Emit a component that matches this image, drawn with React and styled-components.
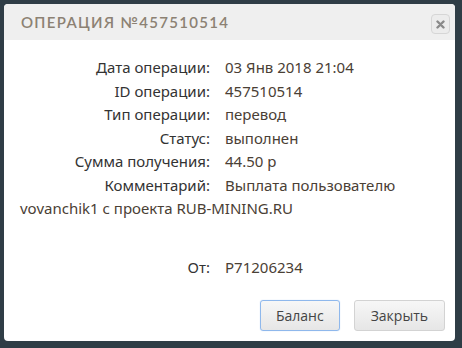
import React from "react";
import styled, { createGlobalStyle } from "styled-components";

const Global = createGlobalStyle`
  html, body { margin: 0; padding: 0; background: #2f3d46; }
  body { width: 462px; height: 348px; overflow: hidden; }
`;

const Page = styled.div`
  padding: 4px 7px 0 4px;
`;

const Dialog = styled.div`
  width: 451px;
  height: 337px;
  background: #fff;
  border-radius: 4px;
  overflow: hidden;
  display: flex;
  flex-direction: column;
`;

const Header = styled.div`
  height: 36px;
  background: #efefef;
  display: flex;
  align-items: center;
  justify-content: space-between;
  padding: 0 5px 0 17px;
`;

const Title = styled.div`
  font-family: "Lato", "Noto Sans", sans-serif;
  font-weight: 600;
  font-size: 15px;
  letter-spacing: 1.3px;
  color: #8c8173;
  text-transform: uppercase;
`;

const CloseBtn = styled.button`
  width: 19px;
  height: 20px;
  padding: 0;
  border: 1px solid #d6d6d6;
  border-radius: 4px;
  background: #ececec;
  display: flex;
  align-items: center;
  justify-content: center;
  margin-top: 4px;
`;

const Body = styled.div`
  flex: 1;
  padding: 16px 16px 0 16px;
  font-family: "Noto Sans", sans-serif;
  font-size: 15px;
  line-height: 23.5px;
  color: #333;
`;

const Row = styled.div`
  margin-top: ${(p) => p.$gap || 0}px;
`;

const Label = styled.span`
  display: inline-block;
  width: 190px;
  text-align: right;
  padding-right: 15px;
  color: #333;
`;

const Value = styled.span`
  color: #4a4035;
`;

const Footer = styled.div`
  display: flex;
  justify-content: flex-end;
  gap: 14px;
  padding: 0 10px 10px 0;
`;

const Button = styled.button`
  height: 31px;
  padding: 0 ${(p) => p.$px}px;
  font-family: "Open Sans", sans-serif;
  font-size: 14px;
  color: #444;
  border-radius: 3px;
  border: 1px solid ${(p) => (p.$focus ? "#8fb8ec" : "#d3d3d3")};
  background: linear-gradient(#f7f7f7, #e6e6e6);
  box-shadow: ${(p) => (p.$focus ? "0 0 1px #a8c8f0" : "none")};
`;

const rows = [
  ["Дата операции:", "03 Янв 2018 21:04"],
  ["ID операции:", "457510514"],
  ["Тип операции:", "перевод"],
  ["Статус:", "выполнен"],
  ["Сумма получения:", "44.50 р"],
];

export default function App() {
  return (
    <Page>
      <Global />
      <Dialog>
        <Header>
          <Title>Операция №457510514</Title>
          <CloseBtn aria-label="close">
            <svg width="9" height="9" viewBox="0 0 9 9">
              <path d="M1.5 1.5L7.5 7.5M7.5 1.5L1.5 7.5" stroke="#8a8a8a" strokeWidth="2.4" strokeLinecap="round" />
            </svg>
          </CloseBtn>
        </Header>
        <Body>
          {rows.map(([l, v]) => (
            <Row key={l}>
              <Label>{l}</Label>
              <Value>{v}</Value>
            </Row>
          ))}
          <Row>
            <Label>Комментарий:</Label>
            <Value>Выплата пользователю vovanchik1 с проекта RUB-MINING.RU</Value>
          </Row>
          <Row $gap={35}>
            <Label>От:</Label>
            <Value>P71206234</Value>
          </Row>
        </Body>
        <Footer>
          <Button $focus $px={15}>Баланс</Button>
          <Button $px={16}>Закрыть</Button>
        </Footer>
      </Dialog>
    </Page>
  );
}
